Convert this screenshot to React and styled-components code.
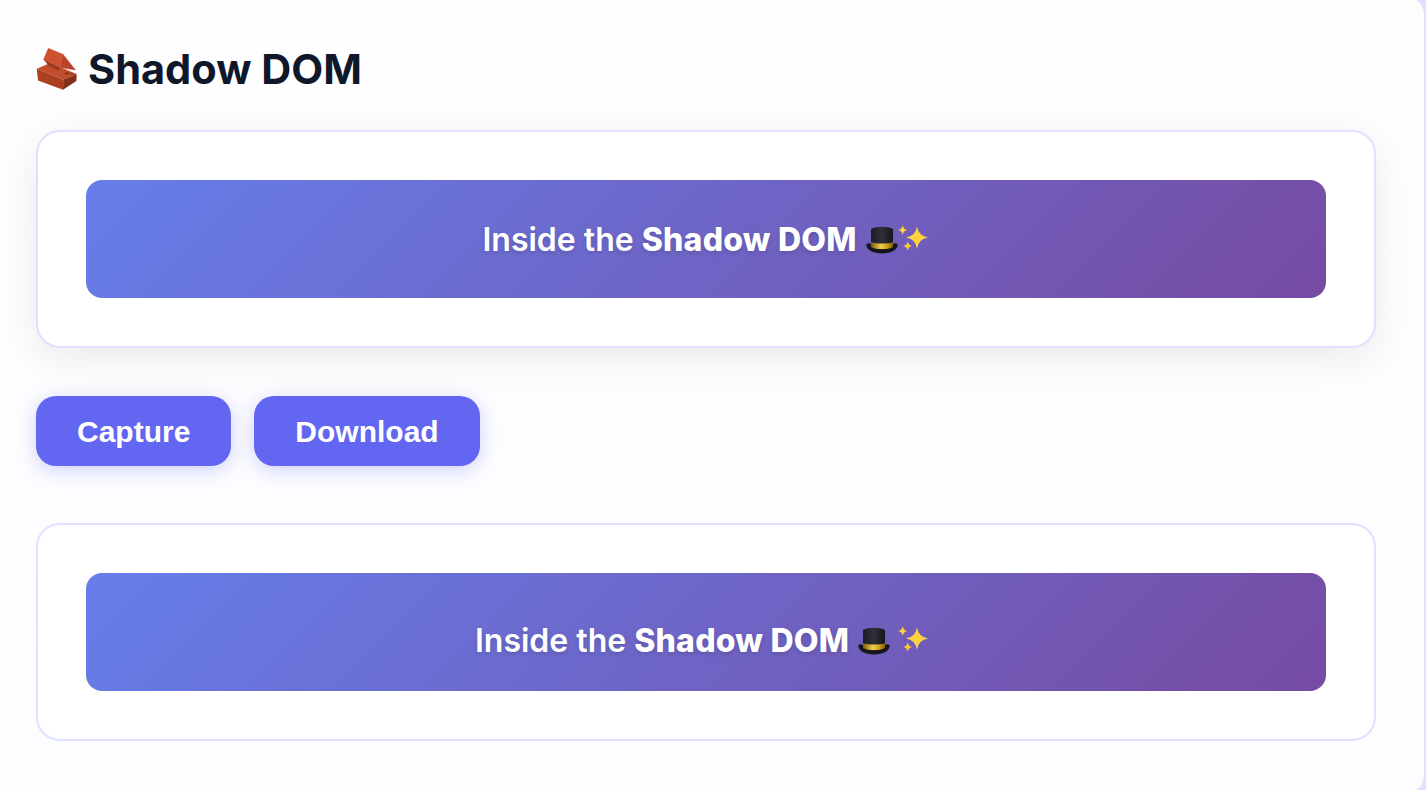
import React from "react";
import styled, { createGlobalStyle } from "styled-components";

const GlobalStyle = createGlobalStyle`
  html, body {
    margin: 0;
    padding: 0;
    height: 100%;
    overflow: hidden;
    background: #e0e0ff;
  }
  #root {
    height: 100%;
  }
`;

const Page = styled.div`
  box-sizing: border-box;
  width: 1424px;
  height: 790px;
  padding: 44px 48px 0 36px;
  border-radius: 0 10px 10px 0 / 0 16px 16px 0;
  background: linear-gradient(180deg, #fefeff 0%, #fcfdff 100%);
  font-family: Inter, "Liberation Sans", sans-serif;
`;

const Title = styled.h1`
  display: flex;
  align-items: center;
  gap: 11px;
  margin: 0 0 36px;
  height: 50px;
  font-size: 41.5px;
  line-height: 50px;
  font-weight: 700;
  color: #0f172a;
`;

const Card = styled.section`
  box-sizing: border-box;
  height: 218px;
  padding: 48px;
  border: 2px solid #e0e0ff;
  border-radius: 24px;
  background: #ffffff;
  box-shadow: ${(p) => (p.$raised ? "0 10px 40px rgba(0, 0, 0, 0.08)" : "none")};
`;

const Banner = styled.div`
  box-sizing: border-box;
  display: flex;
  align-items: center;
  justify-content: center;
  height: 118px;
  padding-top: ${(p) => (p.$shifted ? "16px" : "0")};
  border-radius: 16px;
  background: linear-gradient(135deg, #667eea 0%, #764ba2 100%);
  color: #ffffff;
  font-size: 32px;
  font-weight: 600;
  text-shadow: 0 2px 4px rgba(0, 0, 0, 0.15);
  white-space: pre;

  strong {
    font-weight: 800;
    letter-spacing: 0.2px;
  }
`;

const Toolbar = styled.div`
  display: flex;
  gap: 23px;
  margin: 48px 0 57px;
`;

const Button = styled.button`
  height: 70px;
  padding: 2px 41px 0;
  border: 0;
  border-radius: 20px;
  background: #6366f1;
  color: #ffffff;
  font-family: "Liberation Sans", Arial, sans-serif;
  font-size: 30px;
  font-weight: 700;
  box-shadow: 0 4px 20px rgba(99, 102, 241, 0.3);
`;

const Emoji = styled.svg`
  flex: none;
  display: block;
  width: ${(p) => p.$w}px;
  height: ${(p) => p.$h}px;
  margin-left: ${(p) => p.$gap || 0}px;
  margin-right: ${(p) => p.$trail || 0}px;
`;

const Brick = () => (
  <Emoji $w={41} $h={42} viewBox="0 0 41 42" aria-hidden="true">
    <polygon points="0.8,20.7 14,15 40.7,26 27.3,31.5" fill="#c24d2c" />
    <polygon points="0.8,20.7 27.3,31.5 27,41.8 2,32.5" fill="#ab3f22" />
    <polygon points="27.3,31.5 40.7,26 40.4,33 27,41.8" fill="#84301b" />
    <polygon points="27,6.3 39.5,22 24,19.5" fill="#b8422a" stroke="#b8422a" strokeWidth="0.4" />
    <polygon points="12.3,0.3 7.5,11.5 24,19.5 27,6.3" fill="#cf5230" stroke="#cf5230" strokeWidth="0.4" />
    <polygon points="7.5,11.5 24,19.5 22.5,22.5 13,18" fill="#9a3820" />
    <ellipse cx="31" cy="25.5" rx="2.6" ry="1.1" fill="#84301b" />
    <ellipse cx="36" cy="26" rx="1.6" ry="0.8" fill="#84301b" />
  </Emoji>
);

const Hat = ({ id }) => (
  <Emoji $w={32} $h={30} $gap={9} viewBox="0 0 32 30" aria-hidden="true">
    <defs>
      <linearGradient id={`crown-${id}`} x1="0" x2="1" y1="0" y2="0">
        <stop offset="0" stopColor="#1b1b22" />
        <stop offset="0.5" stopColor="#30303a" />
        <stop offset="1" stopColor="#15151a" />
      </linearGradient>
      <linearGradient id={`band-${id}`} x1="0" x2="1" y1="0" y2="0">
        <stop offset="0" stopColor="#7d5a10" />
        <stop offset="0.45" stopColor="#f2cf4a" />
        <stop offset="0.7" stopColor="#d9a925" />
        <stop offset="1" stopColor="#7d5a10" />
      </linearGradient>
    </defs>
    <path d="M5 5 C10 2 22 2 27 5 L27 20 L5 20 Z" fill={`url(#crown-${id})`} />
    <path d="M5 18 C10 20 22 20 27 18 L27 25 L5 25 Z" fill={`url(#band-${id})`} />
    <path d="M0.5 20 C2 19 4 19 5 20 L5 23 C10 26 22 26 27 23 L27 20 C28 19 30 19 31.5 20 C32.5 25 26 29.5 16 29.5 C6 29.5 -0.5 25 0.5 20 Z" fill="#16161b" />
  </Emoji>
);

const star = (x, y, r) =>
  `M${x} ${y - r} Q${x + r * 0.14} ${y - r * 0.14} ${x + r} ${y} Q${x + r * 0.14} ${y + r * 0.14} ${x} ${y + r} Q${x - r * 0.14} ${y + r * 0.14} ${x - r} ${y} Q${x - r * 0.14} ${y - r * 0.14} ${x} ${y - r} Z`;

const Sparkles = ({ gap, trail }) => (
  <Emoji $w={32} $h={30} $gap={gap} $trail={trail} viewBox="0 0 32 30" aria-hidden="true">
    <path d={star(19, 13.5, 11)} fill="#ffd23f" />
    <path d={star(4.7, 6, 4.7)} fill="#ffd23f" />
    <path d={star(9.7, 22, 4.7)} fill="#fcc832" />
  </Emoji>
);

const Demo = ({ raised, shifted, id }) => (
  <Card $raised={raised}>
    <Banner $shifted={shifted}>
      <span>
        Inside the <strong>Shadow DOM</strong>
      </span>
      <Hat id={id} />
      <Sparkles gap={shifted ? 8 : 0} trail={shifted ? 7 : 0} />
    </Banner>
  </Card>
);

export default function App() {
  return (
    <Page>
      <GlobalStyle />
      <Title>
        <Brick />
        Shadow DOM
      </Title>
      <Demo raised id="a" />
      <Toolbar>
        <Button>Capture</Button>
        <Button>Download</Button>
      </Toolbar>
      <Demo shifted id="b" />
    </Page>
  );
}
